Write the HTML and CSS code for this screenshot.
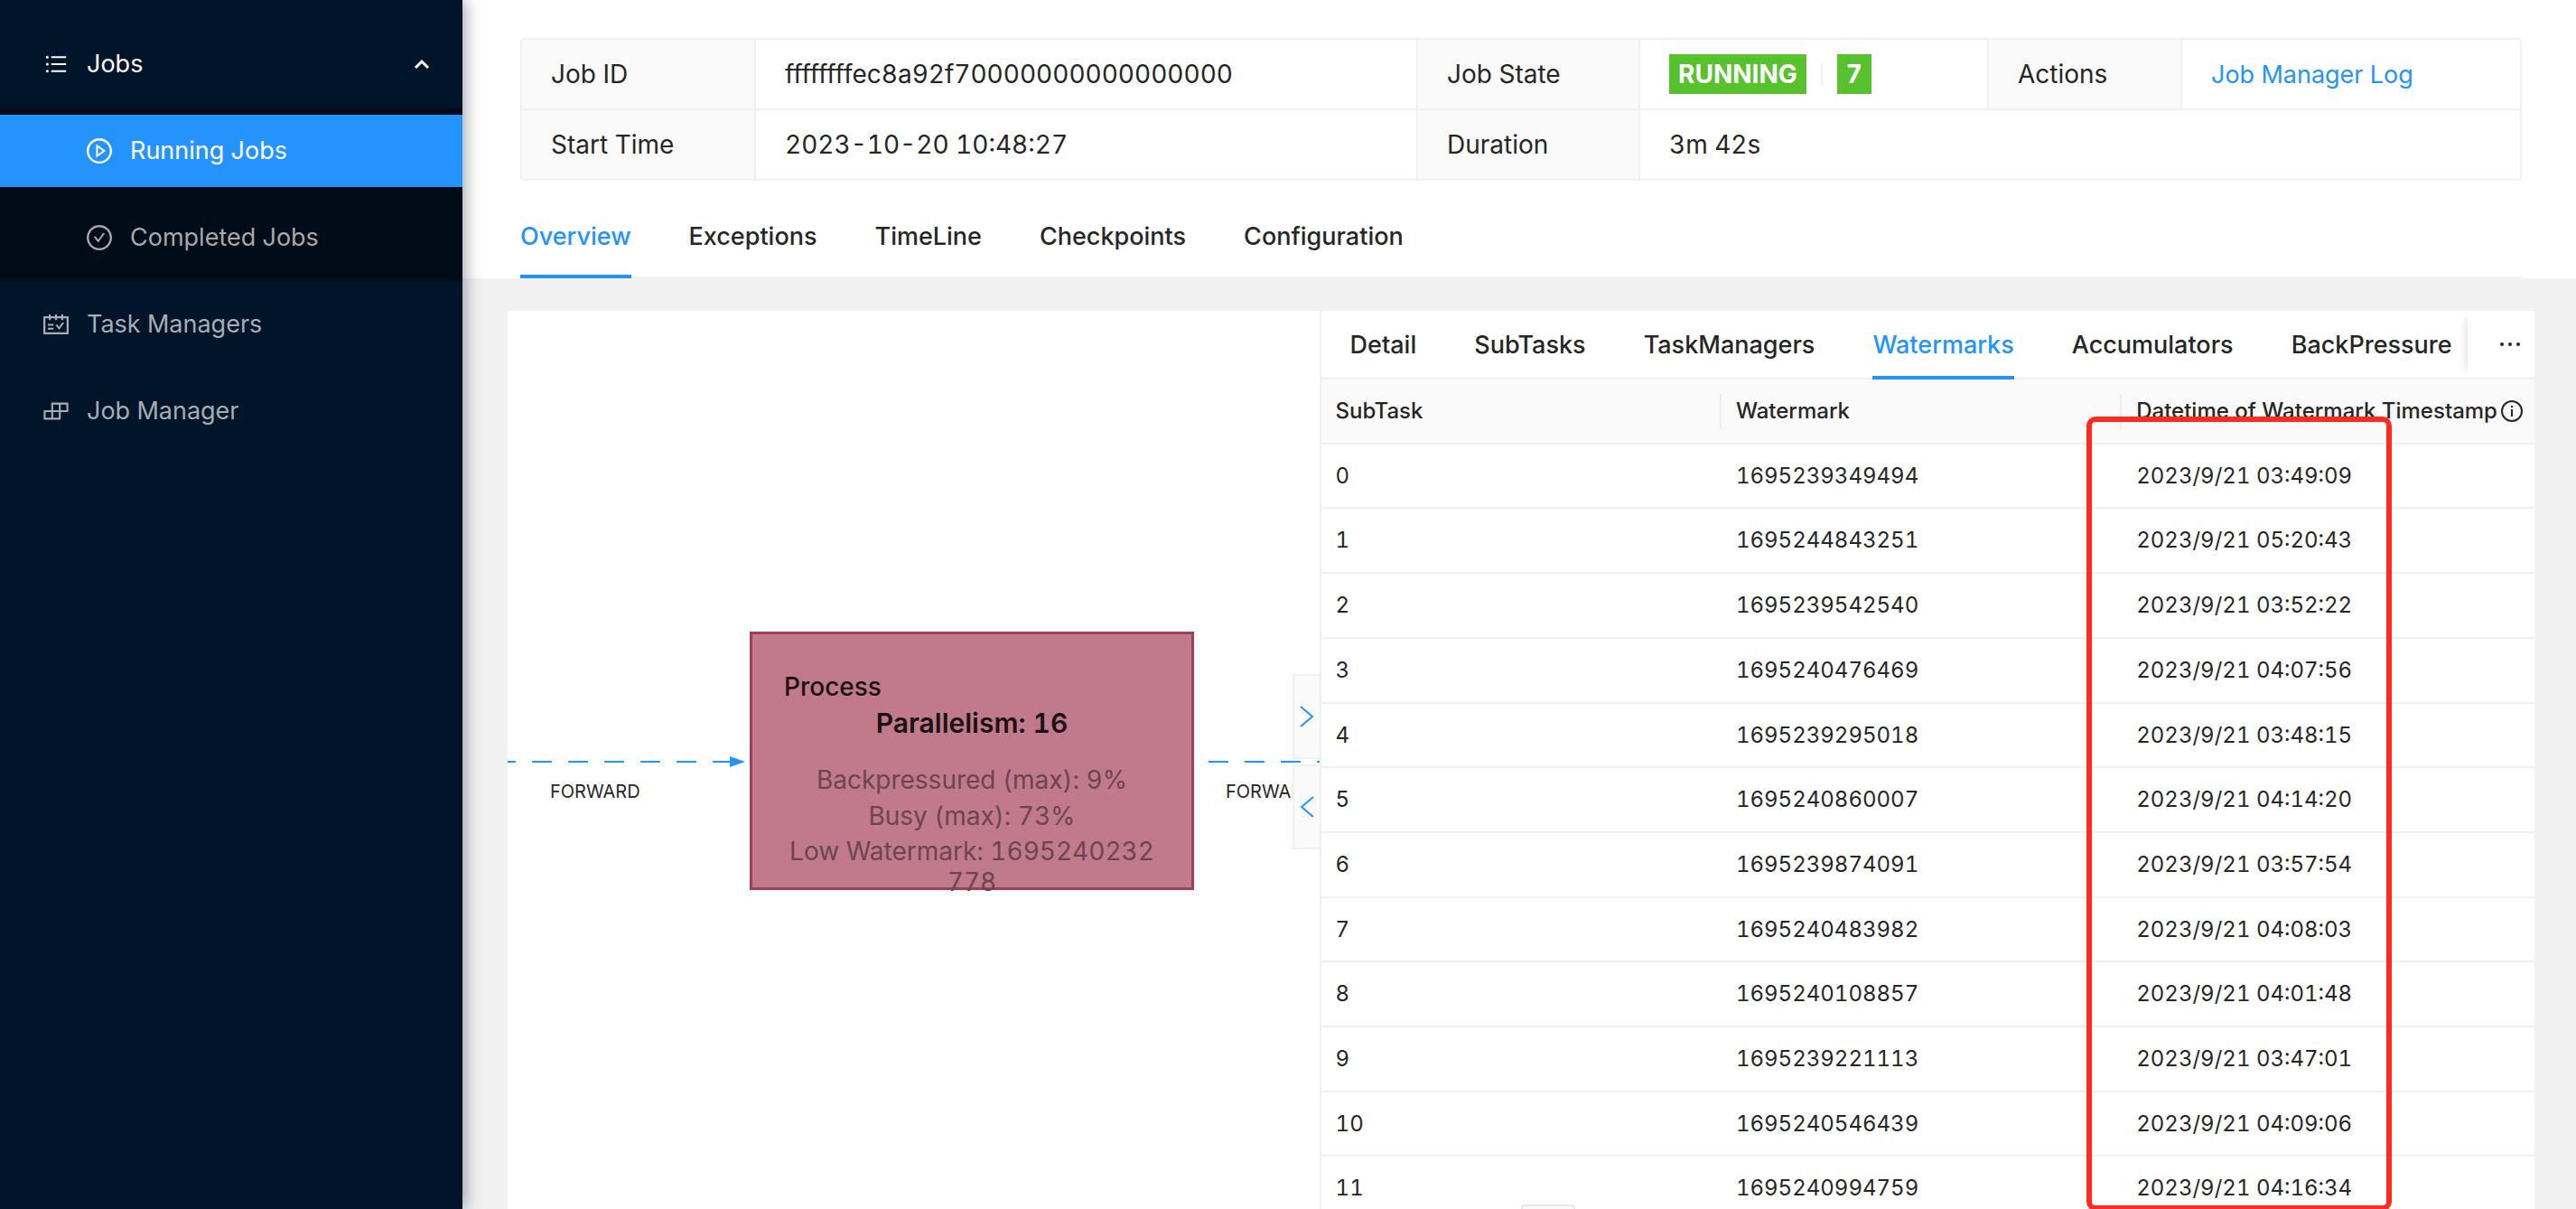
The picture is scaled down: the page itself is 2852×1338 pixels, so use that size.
FILE: index.html
```html
<!DOCTYPE html>
<html lang="en">
<head>
<meta charset="utf-8">
<title>Running Job</title>
<link rel="stylesheet" href="styles.css">
</head>
<body>
<div class="app">
  <nav class="sidebar">
    <button class="menu-item menu-title" type="button">
      <svg class="icon icon-list" viewBox="0 0 1024 1024"><path d="M320 192h600v72H320zM320 476h600v72H320zM320 760h600v72H320z"/><circle cx="160" cy="228" r="56"/><circle cx="160" cy="512" r="56"/><circle cx="160" cy="796" r="56"/></svg>
      <span>Jobs</span>
      <svg class="caret" viewBox="0 0 18 12"><path d="M2 10l7-7 7 7"/></svg>
    </button>
    <div class="submenu">
      <a class="menu-item menu-sub active" href="#running">
        <svg class="icon" viewBox="0 0 1024 1024"><path d="M512 64C264.600 64 64 264.600 64 512s200.600 448 448 448 448-200.600 448-448S759.400 64 512 64zm0 820c-205.400 0-372-166.600-372-372s166.600-372 372-372 372 166.600 372 372-166.600 372-372 372z"/><path d="M719.400 499.100l-296.100-215A15.900 15.900 0 0 0 398 297v430c0 13.100 14.800 20.500 25.300 12.900l296.100-215a15.900 15.900 0 0 0 0-25.800zm-257.600 134V390.900L628.500 512 461.800 633.100z"/></svg>
        <span>Running Jobs</span>
      </a>
      <a class="menu-item menu-sub" href="#completed">
        <svg class="icon" viewBox="0 0 1024 1024"><path d="M699 353h-46.900c-10.200 0-19.900 4.900-25.900 13.300L469 584.300l-71.200-98.800c-6-8.300-15.600-13.300-25.900-13.300H325c-6.500 0-10.300 7.400-6.500 12.700l124.600 172.800a31.800 31.800 0 0 0 51.700 0l210.600-292c3.900-5.300.1-12.700-6.400-12.700z"/><path d="M512 64C264.600 64 64 264.600 64 512s200.600 448 448 448 448-200.600 448-448S759.400 64 512 64zm0 820c-205.400 0-372-166.600-372-372s166.600-372 372-372 372 166.600 372 372-166.600 372-372 372z"/></svg>
        <span>Completed Jobs</span>
      </a>
    </div>
    <a class="menu-item" href="#task-managers">
      <svg class="icon" viewBox="0 0 1024 1024"><path d="M928 224H768v-56c0-4.400-3.600-8-8-8h-56c-4.400 0-8 3.600-8 8v56H548v-56c0-4.400-3.600-8-8-8h-56c-4.400 0-8 3.600-8 8v56H328v-56c0-4.400-3.600-8-8-8h-56c-4.400 0-8 3.600-8 8v56H96c-17.700 0-32 14.300-32 32v576c0 17.700 14.300 32 32 32h832c17.700 0 32-14.300 32-32V256c0-17.700-14.300-32-32-32zm-40 568H136V296h120v56c0 4.400 3.600 8 8 8h56c4.400 0 8-3.600 8-8v-56h148v56c0 4.400 3.600 8 8 8h56c4.400 0 8-3.600 8-8v-56h148v56c0 4.400 3.600 8 8 8h56c4.400 0 8-3.600 8-8v-56h120v496zM416 496H232c-4.400 0-8 3.600-8 8v48c0 4.400 3.600 8 8 8h184c4.400 0 8-3.600 8-8v-48c0-4.400-3.600-8-8-8zm0 136H232c-4.400 0-8 3.600-8 8v48c0 4.400 3.600 8 8 8h184c4.400 0 8-3.600 8-8v-48c0-4.400-3.600-8-8-8zm308.200-177.400L620.600 598.300l-52.800-73.100c-3-4.200-7.800-6.600-12.900-6.600H500c-6.500 0-10.300 7.400-6.500 12.700l114.100 158.200a15.900 15.900 0 0 0 25.800 0l165-228.700c3.800-5.300 0-12.700-6.500-12.700H737c-5-.1-9.800 2.400-12.800 6.500z"/></svg>
      <span>Task Managers</span>
    </a>
    <a class="menu-item" href="#job-manager">
      <svg class="icon" viewBox="0 0 1024 1024"><path d="M916 210H376c-17.700 0-32 14.300-32 32v236H108c-17.700 0-32 14.300-32 32v272c0 17.700 14.300 32 32 32h540c17.700 0 32-14.300 32-32V546h236c17.700 0 32-14.300 32-32V242c0-17.700-14.300-32-32-32zm-504 68h200v200H412V278zm-68 468H144V546h200v200zm268 0H412V546h200v200zm268-268H680V278h200v200z"/></svg>
      <span>Job Manager</span>
    </a>
  </nav>

  <main class="main">
    <header class="job-header">
      <table class="summary">
        <colgroup><col class="c1"><col class="c2"><col class="c3"><col class="c4"><col class="c5"><col class="c6"></colgroup>
        <tr>
          <th scope="row">Job ID</th><td>ffffffffec8a92f70000000000000000</td>
          <th scope="row">Job State</th><td><div class="state"><span class="badge">RUNNING</span><span class="rule"></span><span class="badge count">7</span></div></td>
          <th scope="row">Actions</th><td><a class="log-link" href="#log">Job Manager Log</a></td>
        </tr>
        <tr>
          <th scope="row">Start Time</th><td>2023-10-20 10:48:27</td>
          <th scope="row">Duration</th><td colspan="3">3m 42s</td>
        </tr>
      </table>
      <div class="tabs">
        <a class="tab active" href="#overview">Overview</a>
        <a class="tab" href="#exceptions">Exceptions</a>
        <a class="tab" href="#timeline">TimeLine</a>
        <a class="tab" href="#checkpoints">Checkpoints</a>
        <a class="tab" href="#configuration">Configuration</a>
      </div>
    </header>

    <div class="workspace">
      <section class="graph">
        <svg class="edge edge-in" width="264" height="16"><path class="dash" d="M-13 7H246" /><path class="head" d="M246 1l17 6-17 6z"/></svg>
        <span class="edge-label label-in">FORWARD</span>
        <div class="node">
          <p class="node-name">Process</p>
          <p class="node-parallelism">Parallelism: 16</p>
          <p class="node-metric">Backpressured (max): 9%</p>
          <p class="node-metric">Busy (max): 73%</p>
          <p class="node-metric watermark">Low Watermark: 1695240232<br>778</p>
        </div>
        <svg class="edge edge-out" width="123" height="16"><path class="dash" d="M0 7H123"/></svg>
        <span class="edge-label label-out">FORWARD</span>
        <div class="handles">
          <button type="button" aria-label="Expand graph"><svg viewBox="0 0 16 24"><path d="M1 1l13 11L1 23"/></svg></button>
          <button type="button" aria-label="Expand detail"><svg viewBox="0 0 16 24"><path d="M15 1L2 12l13 11"/></svg></button>
        </div>
      </section>

      <section class="detail">
        <div class="detail-bar">
          <div class="detail-tabs">
            <a class="tab" href="#detail">Detail</a>
            <a class="tab" href="#subtasks">SubTasks</a>
            <a class="tab" href="#taskmanagers">TaskManagers</a>
            <a class="tab active" href="#watermarks">Watermarks</a>
            <a class="tab" href="#accumulators">Accumulators</a>
            <a class="tab" href="#backpressure">BackPressure</a>
          </div>
          <button class="more" type="button" aria-label="More tabs"><svg viewBox="0 0 24 6"><circle cx="3" cy="3" r="2"/><circle cx="12" cy="3" r="2"/><circle cx="21" cy="3" r="2"/></svg></button>
        </div>
        <table class="data">
          <thead><tr><th>SubTask</th><th>Watermark</th><th><div class="th-info">Datetime of Watermark Timestamp<svg viewBox="0 0 24 24"><circle cx="12" cy="12" r="11"/><path d="M12 10v8M12 6v2"/></svg></div></th></tr></thead>
          <tbody>
            <tr><td>0</td><td>1695239349494</td><td>2023/9/21 03:49:09</td></tr>
            <tr><td>1</td><td>1695244843251</td><td>2023/9/21 05:20:43</td></tr>
            <tr><td>2</td><td>1695239542540</td><td>2023/9/21 03:52:22</td></tr>
            <tr><td>3</td><td>1695240476469</td><td>2023/9/21 04:07:56</td></tr>
            <tr><td>4</td><td>1695239295018</td><td>2023/9/21 03:48:15</td></tr>
            <tr><td>5</td><td>1695240860007</td><td>2023/9/21 04:14:20</td></tr>
            <tr><td>6</td><td>1695239874091</td><td>2023/9/21 03:57:54</td></tr>
            <tr><td>7</td><td>1695240483982</td><td>2023/9/21 04:08:03</td></tr>
            <tr><td>8</td><td>1695240108857</td><td>2023/9/21 04:01:48</td></tr>
            <tr><td>9</td><td>1695239221113</td><td>2023/9/21 03:47:01</td></tr>
            <tr><td>10</td><td>1695240546439</td><td>2023/9/21 04:09:06</td></tr>
            <tr><td>11</td><td>1695240994759</td><td>2023/9/21 04:16:34</td></tr>
          </tbody>
        </table>
        <div class="highlight"></div>
      </section>
      <div class="drag-handle"></div>
    </div>
  </main>
</div>
</body>
</html>
```
FILE: styles.css
```css
* { box-sizing: border-box; }
body {
  margin: 0;
  font-family: Inter, "Liberation Sans", sans-serif;
  font-size: 28px;
  line-height: 44px;
  font-variant-numeric: tabular-nums;
  color: #262626;
  background: #f1f1f1;
}
a { color: inherit; text-decoration: none; }
button { font: inherit; color: inherit; border: 0; background: none; padding: 0; }
p { margin: 0; }
table { border-spacing: 0; }

.app { display: flex; height: 100vh; overflow: hidden; }

/* Sidebar */
.sidebar {
  flex: 0 0 512px;
  padding-top: 31px;
  background: #001529;
  box-shadow: 4px 0 16px rgba(0, 21, 41, 0.35);
  z-index: 1;
}
.menu-item {
  display: flex;
  align-items: center;
  gap: 18px;
  width: 100%;
  height: 80px;
  padding: 0 36px 0 46px;
  margin-bottom: 16px;
  color: #a6adb4;
  font-size: 27px;
  text-align: left;
}
.icon { width: 32px; height: 32px; fill: currentColor; }
.icon-list { padding: 2px; }
.menu-title { color: #fff; margin-bottom: 8px; }
.caret { width: 18px; height: 12px; margin-left: auto; fill: none; stroke: #fff; stroke-width: 3; }
.submenu { background: #000c17; padding: 8px 0; margin-bottom: 8px; }
.menu-sub { padding-left: 94px; color: #a6a9ac; }
.menu-sub:last-child { margin-bottom: 0; }
.menu-sub.active { background: #2593fc; color: #fff; }

/* Header */
.main { flex: 1; min-width: 0; display: flex; flex-direction: column; }
.job-header { background: #fff; padding: 42px 60px 0 64px; }
.summary {
  width: 100%;
  table-layout: fixed;
  border: 2px solid #f0f0f0;
  border-radius: 4px;
}
.summary th, .summary td {
  height: 76px;
  padding: 0 32px;
  font-weight: 400;
  text-align: left;
  border-right: 2px solid #f0f0f0;
}
.summary th { background: #fafafa; }
.summary tr:first-child > * { height: 78px; border-bottom: 2px solid #f0f0f0; }
.summary tr > :last-child { border-right: 0; }
.c1 { width: 259px; }
.c3 { width: 246px; }
.c4 { width: 386px; }
.c5 { width: 214px; }
.c6 { width: 374px; }
.state { display: flex; align-items: center; }
.badge { background: #58c22e; color: #fff; font-weight: 700; padding: 0 10px; }
.rule { width: 2px; height: 24px; margin: 0 16px; background: #f0f0f0; }
.log-link { color: #2593fc; font-size: 27px; }

/* Tabs */
.tabs { display: flex; gap: 64px; margin-top: 16px; border-bottom: 2px solid #f0f0f0; }
.tab { font-size: 27px; font-weight: 500; white-space: nowrap; margin-bottom: -2px; border-bottom: 4px solid transparent; }
.tabs .tab { height: 92px; padding-top: 24px; }
.tab.active { color: #2593fc; border-color: #2593fc; }

/* Workspace */
.workspace { position: relative; flex: 1; min-height: 0; display: flex; margin: 36px 46px 0 50px; background: #fff; }
.graph { position: relative; flex: 0 0 calc(40% + 1px); overflow: hidden; }
.edge, .edge-label, .node, .handles { position: absolute; }
.edge { top: 492px; fill: #2593fc; }
.dash { stroke: #2593fc; stroke-width: 2; stroke-dasharray: 22 18; }
.edge-in { left: 0; }
.edge-out { left: 776px; }
.edge-label { top: 518px; font-size: 20px; line-height: 28px; }
.label-in { left: 47px; }
.label-out { left: 795px; }
.node {
  left: 268px;
  top: 355px;
  width: 492px;
  height: 286px;
  padding: 38px 20px 0;
  background: #c07a8b;
  border: 3px solid #a33f58;
  line-height: 40px;
  text-align: center;
  color: #6d4550;
}
.node-name { color: #1c1214; text-align: left; padding-left: 15px; font-weight: 500; }
.node-parallelism { color: #1c1214; font-size: 30px; font-weight: 600; margin-bottom: 23px; }
.watermark { line-height: 34px; padding-top: 2px; }
.handles { right: 0; top: 402px; display: grid; gap: 6px; }
.handles button {
  display: grid;
  place-items: center;
  width: 30px;
  height: 94px;
  background: #fafafa;
  border: 2px solid #f0f0f0;
  border-right: 0;
}
.handles svg { width: 16px; height: 24px; fill: none; stroke: #2593fc; stroke-width: 2; }

/* Detail panel */
.detail { position: relative; flex: 1; min-width: 0; border-left: 2px solid #f0f0f0; }
.detail-bar { display: flex; height: 76px; border-bottom: 2px solid #f0f0f0; }
.detail-tabs { display: flex; flex: 1; min-width: 0; gap: 64px; padding-left: 32px; }
.detail-tabs .tab { height: 76px; padding-top: 16px; }
.more { width: 74px; display: grid; place-items: center; padding-left: 20px; box-shadow: -10px 0 8px -8px rgba(0, 0, 0, 0.12); }
.more svg { width: 24px; height: 6px; fill: #262626; }
.data { width: 100%; table-layout: fixed; font-size: 24px; line-height: 1.5715; }
.data th, .data td { padding: 16px; text-align: left; border-bottom: 2px solid #f0f0f0; white-space: nowrap; }
.data th {
  width: 33%;
  font-weight: 500;
  background: linear-gradient(#ececec, #ececec) right center / 2px 38px no-repeat #fafafa;
}
.data th:last-child { width: 34%; background: #fafafa; }
.th-info { display: flex; align-items: center; gap: 4px; }
.th-info svg { flex: none; width: 24px; height: 24px; fill: none; stroke: #262626; stroke-width: 2; }
.highlight {
  position: absolute;
  top: 117px;
  right: 158px;
  bottom: -2px;
  width: 338px;
  border: 6px solid #ff2b1f;
  border-radius: 10px;
}
.drag-handle {
  position: absolute;
  left: 50%;
  bottom: -15px;
  width: 60px;
  height: 20px;
  border: 2px solid #e8e8e8;
  border-radius: 4px;
  background: #fafafa;
}
```
